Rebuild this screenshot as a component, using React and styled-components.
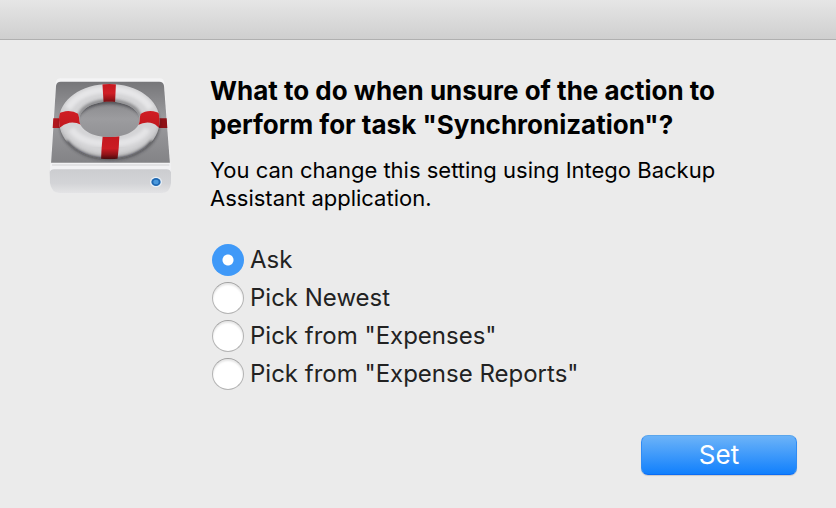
import { useState } from 'react';
import styled, { createGlobalStyle } from 'styled-components';

const GlobalStyle = createGlobalStyle`
  * {
    box-sizing: border-box;
  }
  body {
    margin: 0;
    background: #ebebeb;
    font-family: Inter, "Liberation Sans", sans-serif;
  }
`;

const Dialog = styled.form`
  display: flex;
  flex-direction: column;
  min-height: 100vh;
  background: #ebebeb;
`;

const TitleBar = styled.header`
  height: 40px;
  background: linear-gradient(to bottom, #e6e6e6, #cfcfcf);
  border-bottom: 1px solid #b0b0b0;
`;

const Content = styled.main`
  display: flex;
  flex: 1;
  gap: 38px;
  padding: 34px 100px 0 48px;
`;

const DriveIcon = styled.svg`
  flex: none;
  width: 124px;
  height: 118px;
  margin-top: 3px;
`;

const Title = styled.h1`
  margin: 0;
  font-size: 26px;
  font-weight: 700;
  line-height: 34px;
  color: #000;
`;

const Description = styled.p`
  margin: 14px 0 0;
  font-size: 22px;
  line-height: 28px;
  color: #000;
`;

const Options = styled.fieldset`
  display: flex;
  flex-direction: column;
  gap: 6px;
  margin: 32px 0 0;
  padding: 0 0 0 2px;
  border: none;
`;

const Option = styled.label`
  display: flex;
  align-items: center;
  gap: 6px;
  font-size: 24px;
  line-height: 32px;
  color: #222;
`;

const Radio = styled.input`
  appearance: none;
  flex: none;
  width: 32px;
  height: 32px;
  margin: 0;
  border: 1px solid #b4b4b4;
  border-top-color: #a0a0a0;
  border-radius: 50%;
  background: #fff;
  box-shadow: inset 0 2px 2px rgba(0, 0, 0, 0.1);
  &:checked {
    border: none;
    background: radial-gradient(circle, #fff 5px, #3f99f8 6px);
    box-shadow: none;
  }
`;

const Footer = styled.footer`
  display: flex;
  justify-content: flex-end;
  padding: 0 39px 33px;
`;

const SetButton = styled.button`
  width: 156px;
  height: 40px;
  padding: 0;
  border: 1px solid #2f8cf5;
  border-top-color: #5ba6ec;
  border-bottom-color: #0a6cf5;
  border-radius: 7px;
  background: linear-gradient(to bottom, #6cb3f8, #1180fd);
  box-shadow: 0 1px 1px rgba(0, 0, 0, 0.15);
  font-family: inherit;
  font-size: 26px;
  line-height: 38px;
  color: #fff;
`;

const options = ['Ask', 'Pick Newest', 'Pick from "Expenses"', 'Pick from "Expense Reports"'];

function BackupDrive() {
  return (
    <DriveIcon viewBox="24 36 372 354" aria-hidden="true">
      <defs>
        <linearGradient id="top" x1="0" y1="0" x2="0" y2="1">
          <stop offset="0" stopColor="#767679" />
          <stop offset="0.45" stopColor="#9c9c9f" />
          <stop offset="1" stopColor="#828285" />
        </linearGradient>
        <linearGradient id="front" x1="0" y1="0" x2="0" y2="1">
          <stop offset="0" stopColor="#cbcccf" />
          <stop offset="0.6" stopColor="#d3d4d7" />
          <stop offset="1" stopColor="#e4e4e6" />
        </linearGradient>
        <linearGradient id="topBand" x1="0" y1="0" x2="0" y2="1">
          <stop offset="0" stopColor="#c4181f" />
          <stop offset="0.5" stopColor="#d01f26" />
          <stop offset="0.75" stopColor="#a0151a" />
          <stop offset="1" stopColor="#5c0d10" />
        </linearGradient>
        <linearGradient id="bottomBand" x1="0" y1="0" x2="0" y2="1">
          <stop offset="0" stopColor="#c4181f" />
          <stop offset="0.5" stopColor="#cb1c23" />
          <stop offset="0.75" stopColor="#8e1317" />
          <stop offset="1" stopColor="#2e0708" />
        </linearGradient>
        <linearGradient id="sideBand" x1="0" y1="0" x2="0" y2="1">
          <stop offset="0" stopColor="#d01d24" />
          <stop offset="1" stopColor="#c0191f" />
        </linearGradient>
        <filter id="soft" x="-20%" y="-20%" width="140%" height="140%">
          <feGaussianBlur stdDeviation="5" />
        </filter>
        <filter id="softer" x="-20%" y="-20%" width="140%" height="140%">
          <feGaussianBlur stdDeviation="8" />
        </filter>
        <clipPath id="topFace">
          <path d="M62 50H358Q370 50 372 62L390 298H33L48 62Q50 50 62 50Z" />
        </clipPath>
        <clipPath id="ringShape">
          <path clipRule="evenodd" d="M208 57C292 57 359 104 359 166C359 233 292 283 208 283C124 283 57 233 57 166C57 104 124 57 208 57ZM208 110C156 110 118 134 118 164C118 193 156 216 208 216C260 216 299 193 299 164C299 134 260 110 208 110Z" />
        </clipPath>
      </defs>
      {/* casing */}
      <path d="M62 40H359Q371 40 373 53L391 299V352Q391 383 362 385H60Q33 383 32 352V299L47 53Q49 40 62 40Z" fill="#f4f4f5" />
      <path d="M62 50H358Q370 50 372 62L390 298H33L48 62Q50 50 62 50Z" fill="url(#top)" />
      <path d="M29 320Q29 310 40 310H382Q393 310 393 320V354Q391 384 363 385H61Q34 384 30 354Z" fill="url(#front)" />
      <path d="M32 293H391L393 322Q390 313 380 313H42Q32 313 29 322Z" fill="#f2f2f4" />
      <path d="M36 300H388" stroke="#dcdcdf" strokeWidth="5" />
      {/* rope ends */}
      <path d="M40 160H66V189H38Z" fill="#b0171d" />
      <path d="M354 160H380L382 189H354Z" fill="#8e1217" />
      {/* ring shadow and body */}
      <g clipPath="url(#topFace)">
        <ellipse cx="209" cy="176" rx="125" ry="84" fill="none" stroke="#1d1d20" strokeWidth="50" opacity="0.5" filter="url(#soft)" />
      </g>
      <g clipPath="url(#ringShape)">
        <rect x="50" y="50" width="320" height="240" fill="#d4d4d6" />
        <ellipse cx="208" cy="157" rx="166" ry="126" fill="none" stroke="#3c3c3f" strokeWidth="20" opacity="0.35" filter="url(#softer)" />
        <path d="M118 158C120 128 160 108 208 108C256 108 297 128 299 158" fill="none" stroke="#3c3c3f" strokeWidth="10" opacity="0.55" filter="url(#soft)" />
        <path d="M76 232C104 270 156 288 208 288C260 288 312 270 340 232" fill="none" stroke="#101012" strokeWidth="16" opacity="0.75" filter="url(#soft)" />
        <path d="M84 130C112 88 158 74 208 74C258 74 304 88 332 130" fill="none" stroke="#e6e6e8" strokeWidth="20" filter="url(#soft)" />
        <path d="M94 192C116 226 160 236 208 236C256 236 300 226 322 192" fill="none" stroke="#e4e4e6" strokeWidth="20" filter="url(#soft)" />
        <path d="M187 53H228L225 116Q207 108 191 116Z" fill="url(#topBand)" />
        <path d="M188 214H238Q237 250 232 287H183Q184 250 188 214Z" fill="url(#bottomBand)" />
        <path d="M52 150Q60 140 85 138Q102 138 114 146L123 179Q106 170 88 173Q70 177 59 188L52 190Z" fill="url(#sideBand)" />
        <path d="M364 150Q356 140 331 138Q314 138 302 147L294 180Q312 170 331 173Q348 177 355 187L364 190Z" fill="url(#sideBand)" />
      </g>
      {/* status light */}
      <ellipse cx="348" cy="351" rx="18" ry="16" fill="#e9f0f6" />
      <ellipse cx="348" cy="351" rx="14" ry="12" fill="#1f68b2" />
      <ellipse cx="348" cy="351" rx="8" ry="7" fill="#4a98dc" />
    </DriveIcon>
  );
}

function App() {
  const [action, setAction] = useState('Ask');

  return (
    <>
      <GlobalStyle />
      <Dialog onSubmit={(e) => e.preventDefault()}>
        <TitleBar />
        <Content>
          <BackupDrive />
          <div>
            <Title id="question">What to do when unsure of the action to perform for task "Synchronization"?</Title>
            <Description>You can change this setting using Intego Backup Assistant application.</Description>
            <Options aria-labelledby="question">
              {options.map((option) => (
                <Option key={option}>
                  <Radio
                    type="radio"
                    name="action"
                    value={option}
                    checked={action === option}
                    onChange={() => setAction(option)}
                  />
                  {option}
                </Option>
              ))}
            </Options>
          </div>
        </Content>
        <Footer>
          <SetButton type="submit">Set</SetButton>
        </Footer>
      </Dialog>
    </>
  );
}

export default App;
